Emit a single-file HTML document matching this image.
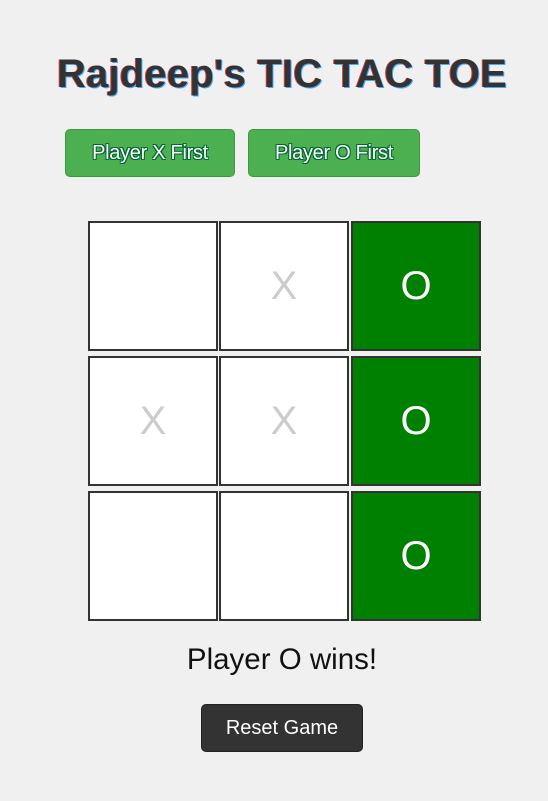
<!DOCTYPE html>
<html><head><style>
body{margin:0;background:#f0f0f0;font-family:"Liberation Sans",Arial,sans-serif;width:548px;height:801px;position:relative;overflow:hidden}
h1{position:absolute;left:0;width:564px;top:51px;margin:0;text-align:center;font-size:40px;font-weight:bold;color:#333;text-shadow:1px 1px 0 #4af,-1px 0 0 #c44;line-height:46px;letter-spacing:0.2px}
.b{position:absolute;top:129px;height:48px;background:#4caf50;border:1px solid #3a9a3e;border-radius:5px;color:#fff;font-size:20px;line-height:46px;text-align:center;text-shadow:1px 1px 0 #063,-1px -1px 0 #063,1px -1px 0 #063,-1px 1px 0 #063;box-sizing:border-box;letter-spacing:-0.3px}
.c{position:absolute;width:130px;height:130px;box-sizing:border-box;border:2px solid #333;background:#fff;text-align:center;line-height:126px;font-size:40px;color:#ccc}
.g{background:#008000;color:#fff}
#s{position:absolute;top:643px;left:0;width:564px;text-align:center;font-size:29.5px;color:#111}
#r{position:absolute;left:201px;top:704px;width:162px;height:48px;background:#333;border-radius:5px;color:#fff;font-size:20px;line-height:46px;text-align:center;box-sizing:border-box;border:1px solid #222}
</style></head><body>
<h1>Rajdeep's TIC TAC TOE</h1>
<div class="b" style="left:65px;width:170px">Player X First</div>
<div class="b" style="left:248px;width:172px">Player O First</div>
<div class="c" style="left:88px;top:221px"></div>
<div class="c" style="left:219px;top:221px">X</div>
<div class="c g" style="left:351px;top:221px">O</div>
<div class="c" style="left:88px;top:356px">X</div>
<div class="c" style="left:219px;top:356px">X</div>
<div class="c g" style="left:351px;top:356px">O</div>
<div class="c" style="left:88px;top:491px"></div>
<div class="c" style="left:219px;top:491px"></div>
<div class="c g" style="left:351px;top:491px">O</div>
<div id="s">Player O wins!</div>
<div id="r">Reset Game</div>
</body></html>
